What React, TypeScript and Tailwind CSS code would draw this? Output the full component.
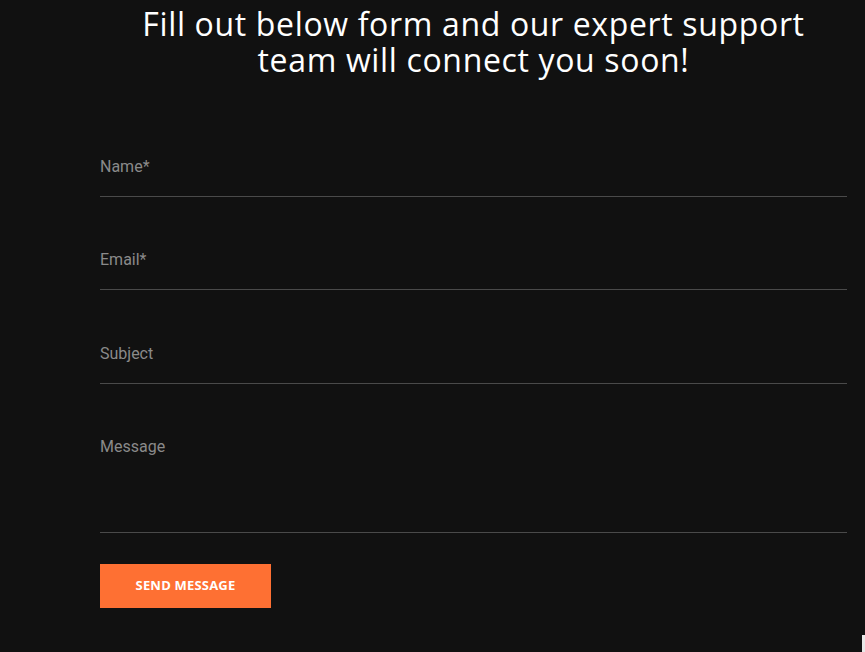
import React from "react";

const Field = ({ label, cls }: { label: string; cls: string }) => (
  <div className={`border-b border-[#4a4a4a] ${cls}`}>
    <div className="text-[16px] leading-[24px] text-[#8a8a8a]" style={{ fontFamily: "Roboto, sans-serif" }}>
      {label}
    </div>
  </div>
);

export default function App() {
  return (
    <div className="relative min-h-[652px] w-full bg-[#111111] overflow-hidden">
      <div className="ml-[100px] w-[747px] pt-[6px]">
        <h1
          className="text-center text-white text-[32px] leading-[36px] font-normal tracking-[0.65px]"
          style={{ fontFamily: "'Open Sans', sans-serif" }}
        >
          Fill out below form and our expert support
          <br />
          team will connect you soon!
        </h1>
        <form className="mt-[77px] flex flex-col gap-[51px]">
          <Field label="Name*" cls="pb-[17px]" />
          <Field label="Email*" cls="pb-[17px]" />
          <Field label="Subject" cls="pb-[17px] mt-[1px]" />
          <Field label="Message" cls="pb-[73px]" />
        </form>
        <button
          type="button"
          className="mt-[31px] h-[44px] w-[171px] bg-[#fe7033] text-white text-[13px] font-bold uppercase tracking-[0.2px]"
          style={{ fontFamily: "'Open Sans', sans-serif" }}
        >
          Send Message
        </button>
      </div>
      <div className="absolute right-0 bottom-0 h-[17px] w-[3px] bg-[#e8e8e8]" />
    </div>
  );
}
